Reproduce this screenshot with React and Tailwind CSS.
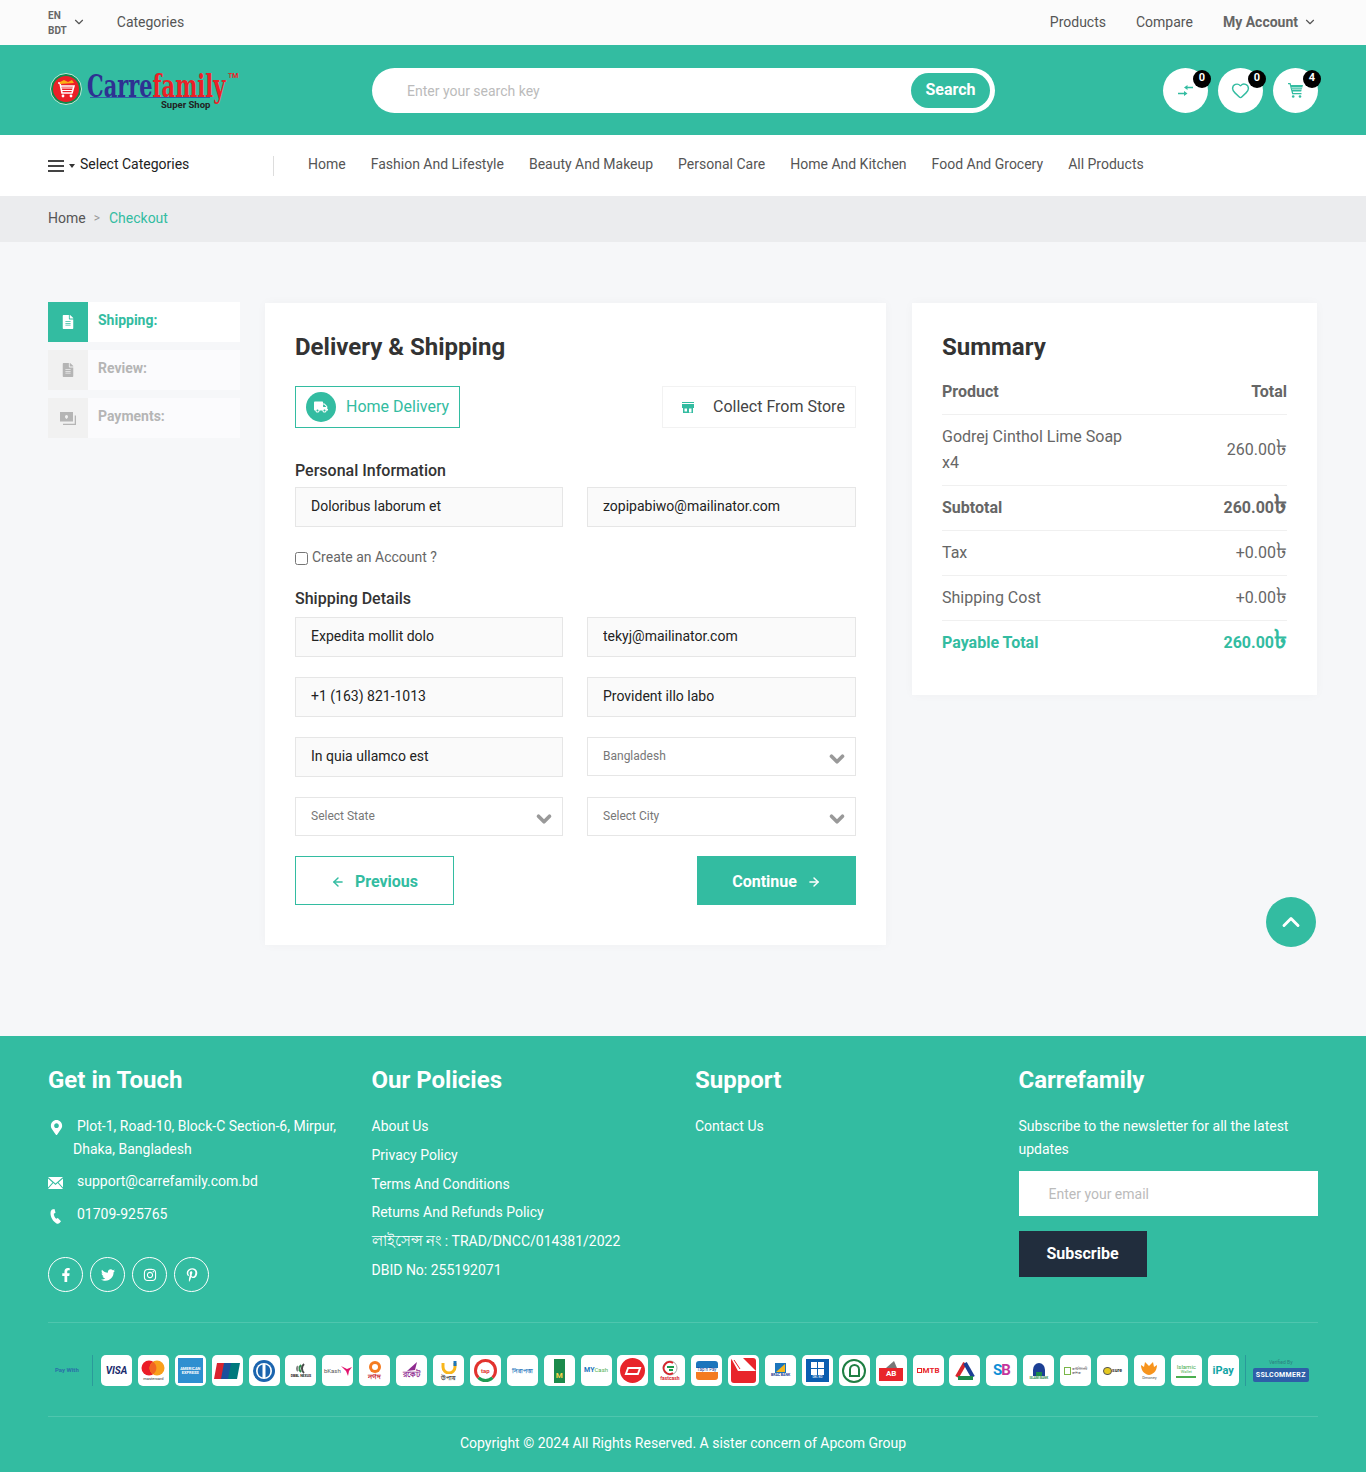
import { ChevronDown, ChevronUp, ArrowLeft, ArrowRight, Heart } from 'lucide-react'
import { FaFileAlt, FaTruck, FaMapMarkerAlt, FaFacebookF, FaTwitter, FaInstagram, FaPinterestP } from 'react-icons/fa'

const TEAL = 'bg-[#33bca1]'
const navItems = ['Home', 'Fashion And Lifestyle', 'Beauty And Makeup', 'Personal Care', 'Home And Kitchen', 'Food And Grocery', 'All Products']
const policies = ['About Us', 'Privacy Policy', 'Terms And Conditions', 'Returns And Refunds Policy']

function Taka({ bold }) {
  return <span className={`leading-[0] ${bold ? 'text-[1.6em]' : 'text-[1.35em]'}`}>৳</span>
}

function TextField({ value }) {
  return (
    <input
      readOnly
      defaultValue={value}
      className="w-full h-10 px-[15px] pb-[2px] border border-[#e6e6e6] bg-[#fafafa] text-sm text-[#222] outline-none"
    />
  )
}

function SelectField({ label }) {
  return (
    <div className="w-full h-[39px] pl-[15px] pr-[7px] border border-[#e6e6e6] bg-white flex items-center justify-between">
      <span className="text-xs text-[#777] -mt-[2px]">{label}</span>
      <ChevronDown className="w-[22px] h-[22px] mt-[5px] text-[#999]" strokeWidth={4} />
    </div>
  )
}

function Step({ icon, label, active }) {
  return (
    <div className={`flex h-10 ${active ? 'bg-white' : 'bg-[#fbfbfd]'}`}>
      <div className={`w-10 flex items-center justify-center text-sm ${active ? 'bg-[#33bca1] text-white' : 'bg-[#f1f1f1] text-[#b5b5b5]'}`}>{icon}</div>
      <span className={`pl-[10px] pt-[10px] text-sm font-bold leading-[16px] ${active ? 'text-[#33bca1]' : 'text-[#b5b5b5]'}`}>{label}</span>
    </div>
  )
}

function SummaryRow({ left, right, className = '' }) {
  return (
    <div className={`flex items-center justify-between h-[45px] border-b border-[#f0f0f0] text-base ${className}`}>
      <span>{left}</span>
      <span>{right}</span>
    </div>
  )
}

function RoundIcon({ count, children }) {
  return (
    <div className="relative w-[45px] h-[45px] rounded-full bg-white flex items-center justify-center text-[#33bca1]">
      {children}
      <span className="absolute top-[2px] right-[-3px] w-[18px] h-[18px] rounded-full bg-black text-white text-[11px] font-bold flex items-center justify-center">{count}</span>
    </div>
  )
}

function Social({ children }) {
  return <div className="w-[35px] h-[35px] rounded-full border border-white flex items-center justify-center text-white text-sm">{children}</div>
}

function Tile({ children }) {
  return <div className="w-[31px] h-[31px] shrink-0 rounded-[5px] bg-white flex flex-col items-center justify-center overflow-hidden leading-none">{children}</div>
}

function PaymentTiles() {
  return (
    <div className="flex gap-[5.9px]">
      <Tile><span className="text-[10px] font-bold italic text-[#1a2a6c]">VISA</span></Tile>
      <Tile>
        <svg width="26" height="16" viewBox="0 0 26 16"><circle cx="9" cy="8" r="7.5" fill="#eb1c26" /><circle cx="17" cy="8" r="7.5" fill="#f99f1b" /><path d="M13 1.700a7.500 7.500 0 0 1 0 12.600a7.500 7.500 0 0 1 0-12.600z" fill="#f26522" /></svg>
        <span className="text-[4px] mt-[1px] text-[#333]">mastercard</span>
      </Tile>
      <Tile><div className="w-[25px] h-[25px] bg-[#2f8fd0] text-white text-[4px] font-bold flex flex-col items-center justify-center"><span>AMERICAN</span><span>EXPRESS</span></div></Tile>
      <Tile>
        <svg width="26" height="18" viewBox="0 0 26 18"><path d="M3 1h8l-3 16H0z" fill="#d9232e" /><path d="M10 1h8l-3 16H7z" fill="#1c4f9c" /><path d="M17 1h9l-3 16h-9z" fill="#00797d" /></svg>
      </Tile>
      <Tile>
        <svg width="24" height="24" viewBox="0 0 24 24"><circle cx="12" cy="12" r="11" fill="#1b64ae" /><circle cx="12" cy="12" r="8" fill="#fff" /><path d="M10.500 5.500a6.800 6.800 0 0 0 0 13zM13.500 5.500a6.800 6.800 0 0 1 0 13z" fill="#1b64ae" /></svg>
      </Tile>
      <Tile>
        <svg width="20" height="13" viewBox="0 0 20 13" fill="none"><path d="M13 2a6 6 0 0 0 0 9" stroke="#4a4a4a" strokeWidth="2" /><path d="M10 3a5 5 0 0 0 0 7" stroke="#2f8e4e" strokeWidth="2" /><path d="M7 4a4 4 0 0 0 0 5" stroke="#888" strokeWidth="2" /></svg>
        <span className="text-[3.5px] font-bold text-[#222]">DBBL NEXUS</span>
      </Tile>
      <Tile>
        <div className="flex items-center"><span className="text-[6px] text-[#555]">bKash</span>
          <svg width="11" height="11" viewBox="0 0 11 11"><path d="M0 1l6 3 5-2-3 4-1 5-2-5z" fill="#e2136e" /></svg></div>
      </Tile>
      <Tile>
        <svg width="14" height="14" viewBox="0 0 14 14"><circle cx="7" cy="7" r="6" fill="#f47b20" /><circle cx="7" cy="7" r="3" fill="#fff" /></svg>
        <span className="text-[7px] font-bold text-[#c62127]">নগদ</span>
      </Tile>
      <Tile>
        <svg width="12" height="9" viewBox="0 0 12 9"><path d="M1 9l10-9-2 8z" fill="#8e2a8f" /></svg>
        <span className="text-[8px] font-bold text-[#8e2a8f]">রকেট</span>
      </Tile>
      <Tile>
        <svg width="16" height="13" viewBox="0 0 16 13" fill="none"><path d="M2 2v4a6 6 0 0 0 12 0V2" stroke="#f8b61c" strokeWidth="3" /><path d="M14 0v5" stroke="#1c75bc" strokeWidth="3" /></svg>
        <span className="text-[6px] font-bold text-[#333] mt-[1px]">উপায়</span>
      </Tile>
      <Tile><div className="w-[23px] h-[23px] rounded-full border-[3px] border-[#e2322d] border-b-[#1f9d55] flex items-center justify-center text-[6px] font-bold text-[#e2322d]">tap</div></Tile>
      <Tile><span className="text-[6px] font-bold text-[#1c75bc]">নিরাপত্তা</span></Tile>
      <Tile><div className="w-[11px] h-[24px] bg-[#1b8a4b] text-[#f8d24a] text-[8px] font-bold flex items-end justify-center pb-[3px]">M</div></Tile>
      <Tile><div className="flex items-baseline"><span className="text-[7px] font-bold text-[#1c75bc]">MY</span><span className="text-[6px] text-[#4caf50]">Cash</span></div></Tile>
      <Tile><div className="w-[25px] h-[25px] rounded-full bg-[#e8252b] flex items-center justify-center"><div className="w-[14px] h-[8px] border-2 border-white -skew-x-[20deg]" /></div></Tile>
      <Tile>
        <svg width="18" height="16" viewBox="0 0 18 16" fill="none"><circle cx="9" cy="8" r="7" stroke="#aaa" /><path d="M12 3a6 6 0 1 0 0 10" stroke="#d7262c" strokeWidth="2" /><path d="M6 7h7M8 10h4" stroke="#1c9a4d" strokeWidth="2" /></svg>
        <span className="text-[5px] font-bold text-[#d7262c]">fastcash</span>
      </Tile>
      <Tile>
        <div className="w-[22px] h-[7px] bg-[#1c75bc] rounded-t-[3px]" />
        <span className="text-[4.5px] text-[#1c3f94]">Tap n Pay</span>
        <div className="w-[22px] h-[8px] bg-[#f47b20] rounded-b-[3px]" />
      </Tile>
      <Tile>
        <svg width="25" height="25" viewBox="0 0 25 25"><rect width="25" height="25" rx="3" fill="#e8252b" /><path d="M0 0h12l13 13H7z" fill="#fff" /><path d="M3 2l6 9" stroke="#e8252b" /></svg>
      </Tile>
      <Tile>
        <svg width="11" height="10" viewBox="0 0 11 10"><rect width="11" height="10" fill="#1c75bc" /><path d="M1 9L10 1v8z" fill="#f8b61c" /></svg>
        <span className="text-[3.5px] font-bold text-[#1c3f94] mt-[1px]">BRAC BANK</span>
      </Tile>
      <Tile>
        <div className="w-[23px] h-[23px] bg-[#0a5eb0] flex flex-col items-center justify-center">
          <div className="grid grid-cols-2 gap-[1px]"><div className="w-[6px] h-[6px] bg-white" /><div className="w-[6px] h-[6px] bg-white" /><div className="w-[6px] h-[6px] bg-white" /><div className="w-[6px] h-[6px] bg-white" /></div>
          <span className="text-[3px] text-white mt-[1px]">DBL BD</span>
        </div>
      </Tile>
      <Tile><div className="w-[24px] h-[24px] rounded-full border-2 border-[#1f7f43] flex items-center justify-center"><div className="w-[11px] h-[13px] rounded-t-full border-2 border-[#1f7f43]" /></div></Tile>
      <Tile>
        <svg width="14" height="7" viewBox="0 0 14 7"><path d="M2 7l8-7 3 7z" fill="#777" /></svg>
        <div className="w-[24px] h-[13px] bg-[#e8252b] text-white text-[8px] font-bold flex items-center justify-center">AB</div>
      </Tile>
      <Tile><div className="flex items-center gap-[1px]"><span className="w-[5px] h-[5px] border border-[#e8252b]" /><span className="text-[8px] font-bold text-[#e8252b]">MTB</span></div></Tile>
      <Tile>
        <svg width="22" height="22" viewBox="0 0 22 22" fill="none"><path d="M11 3L3 17" stroke="#d7262c" strokeWidth="4" /><path d="M11 3l8 14" stroke="#1c3f94" strokeWidth="4" /><path d="M4 18h15" stroke="#1c8a4b" strokeWidth="4" /></svg>
      </Tile>
      <Tile><div className="flex text-[15px] font-bold leading-none"><span className="text-[#0e8fd6]">S</span><span className="text-[#c5359b] -ml-[1px]">B</span></div></Tile>
      <Tile>
        <svg width="14" height="14" viewBox="0 0 14 14"><path d="M1 14V8a6 7 0 0 1 12 0v6z" fill="#1c3f94" /><rect x="4" y="10" width="6" height="4" fill="#1c8a4b" /></svg>
        <span className="text-[3px] font-bold text-[#1c8a4b] text-center mt-[1px]">ISLAMI BANK</span>
      </Tile>
      <Tile>
        <div className="flex items-center gap-[1px]"><span className="w-[7px] h-[8px] border border-[#7ab648]" /><span className="text-[3.5px] text-[#333] leading-[4px]">কমিউনিটি<br />ব্যাংক</span></div>
      </Tile>
      <Tile>
        <div className="flex items-center"><span className="w-[9px] h-[8px] rounded-full bg-[#e5c81f] border border-[#555]" /><span className="text-[5px] font-bold text-[#333]">sure</span></div>
      </Tile>
      <Tile>
        <svg width="18" height="14" viewBox="0 0 18 14"><path d="M9 14C3 13 1 8 1 4l3 2 1-5 4 4 4-4 1 5 3-2c0 4-2 9-8 10z" fill="#f7941d" /></svg>
        <span className="text-[4px] text-[#555] mt-[1px]">Dmoney</span>
      </Tile>
      <Tile>
        <span className="text-[6px] text-[#4caf50]">Islamic</span>
        <span className="text-[4px] text-[#4caf50]">Wallet</span>
        <div className="w-[20px] h-[2px] bg-[#4caf50] mt-[2px]" />
      </Tile>
      <Tile><span className="text-[11px] font-bold text-[#12a5a5]">iPay</span></Tile>
    </div>
  )
}

export default function App() {
  return (
    <div className="w-full font-['Roboto',sans-serif] text-[#333]">
      {/* top bar */}
      <div className="h-[45px] bg-[#fbfbfb] px-12 flex items-center justify-between">
        <div className="flex items-center">
          <div className="text-[10px] font-bold text-[#666] leading-[15px] mt-[1px]">
            <div>EN</div>
            <div>BDT</div>
          </div>
          <ChevronDown className="w-[14px] h-[14px] ml-[5px] -mt-[1px] text-[#555]" />
          <span className="ml-[31px] mb-[2px] text-sm text-[#555]">Categories</span>
        </div>
        <div className="flex items-center text-sm text-[#555] gap-[30px] pr-[1px] mb-[2px]">
          <span>Products</span>
          <span>Compare</span>
          <span className="flex items-center font-bold text-[#666]">My Account<ChevronDown className="w-[14px] h-[14px] ml-[5px] text-[#555]" /></span>
        </div>
      </div>

      {/* header */}
      <div className={`h-[90px] ${TEAL} px-12 flex items-center`}>
        <div className="w-[324px] flex items-center -mt-[2px]">
          <svg width="32" height="32" viewBox="0 0 32 32" className="shrink-0 ml-[2px]">
            <circle cx="16" cy="16" r="15.500" fill="#0e8a4d" stroke="#bfe8dc" strokeWidth="1" />
            <circle cx="16" cy="16" r="13" fill="#ec1f27" />
            <path d="M8 10h2l2 10h10l2-7H11" fill="none" stroke="#fff" strokeWidth="1.600" />
            <path d="M12 15h11M12 17.500h10" stroke="#fff" strokeWidth="1" />
            <circle cx="13" cy="23" r="1.400" fill="#fff" /><circle cx="21" cy="23" r="1.400" fill="#fff" />
            <path d="M10 9l4-2 4 2 4-2 2 3-14 1z" fill="#fbb017" />
          </svg>
          <div className="relative w-[152px] h-[44px] ml-[5px]">
            <div className="absolute left-0 top-[7px] origin-left scale-x-[0.675] whitespace-nowrap font-['DejaVu_Serif',serif] text-[31px] font-bold leading-[24px]">
              <span className="text-[#2e3192]">Carre</span><span className="text-[#ec1f27]">family</span>
            </div>
            <div className="absolute left-[3px] top-[30px] w-[120px] h-[1px] bg-[#2e5fa8]" />
            <span className="absolute left-[141px] top-[4px] text-[7px] font-bold text-[#ec1f27]">TM</span>
            <span className="absolute left-[74px] top-[31px] text-[9.500px] font-bold text-[#222] whitespace-nowrap">Super Shop</span>
          </div>
        </div>
        <div className="w-[623px] h-[45px] rounded-full bg-white flex items-center justify-between pl-[35px] pr-[5px]">
          <span className="mt-[2px] text-sm text-[#bbb]">Enter your search key</span>
          <span className={`w-[79px] h-[35px] rounded-full ${TEAL} text-white text-base font-bold flex items-center justify-center`}>Search</span>
        </div>
        <div className="ml-auto flex gap-[10px]">
          <RoundIcon count="0">
            <svg width="15" height="11" viewBox="0 0 15 11" fill="currentColor"><path d="M6 2.500L9.500 0v1.800H15v1.400H9.500V5zM9.500 8.500L6 11V9.200H0V7.800h6V6z" /></svg>
          </RoundIcon>
          <RoundIcon count="0"><Heart className="w-[19px] h-[19px]" strokeWidth={1.8} /></RoundIcon>
          <RoundIcon count="4">
            <svg width="15" height="15" viewBox="0 0 15 15" fill="currentColor"><path d="M0 0h2.500l.6 2H15l-1.800 6.500H4.800l.4 1.500h8.300v1.200H4.200L1.600 1.200H0z" /><path d="M3.500 4.400h11v.8h-11zM4 6.400h10v.6H4z" fill="#fff" /><circle cx="5.200" cy="13.500" r="1.300" /><circle cx="12" cy="13.500" r="1.300" /></svg>
          </RoundIcon>
        </div>
      </div>

      {/* nav */}
      <div className="h-[61px] bg-white px-12 flex items-center">
        <div className="w-[225px] flex items-center">
          <div className="w-4 flex flex-col gap-[3px]">
            <div className="h-[2px] bg-[#444]" />
            <div className="h-[2px] bg-[#444]" />
            <div className="h-[2px] bg-[#444]" />
          </div>
          <div className="ml-[5px] mt-[1px] w-0 h-0 border-x-[3.500px] border-x-transparent border-t-[4px] border-t-[#333]" />
          <span className="ml-[5px] mb-[4px] text-sm text-[#222]">Select Categories</span>
        </div>
        <div className="w-px h-5 bg-[#ddd]" />
        <div className="ml-[34px] mb-[4px] flex gap-[25px] text-sm text-[#555]">
          {navItems.map(n => <span key={n}>{n}</span>)}
        </div>
      </div>

      {/* breadcrumb */}
      <div className="h-[46px] bg-[#ebecee] px-12 pb-[2px] flex items-center text-sm">
        <span className="text-[#555]">Home</span>
        <span className="ml-[8px] mr-[9px] text-xs text-[#999]">&gt;</span>
        <span className="text-[#33bca1]">Checkout</span>
      </div>

      {/* checkout */}
      <div className="relative bg-[#f6f7f9] pt-[60px] pb-[91px] px-12 flex items-start">
        <div className="w-[192px] flex flex-col gap-2">
          <Step active label="Shipping:" icon={<FaFileAlt />} />
          <Step label="Review:" icon={<FaFileAlt />} />
          <Step label="Payments:" icon={
            <svg width="16" height="13" viewBox="0 0 16 13" fill="currentColor" className="mt-[1px]">
              <path fillRule="evenodd" d="M0 0h13v9.500H0zM6.500 3a1.800 1.800 0 0 0-1.500 1.800c0 1 .8 1.700 1.500 2.200.7-.5 1.500-1.200 1.500-2.200A1.800 1.800 0 0 0 6.500 3z" />
              <path d="M14.700 3.500H16V13H3v-1.200h11.700z" />
            </svg>
          } />
        </div>

        <div className="ml-[25px] mt-px w-[621px] bg-white px-[30px] pt-[30px] pb-[40px] shadow-[0_0_10px_rgba(0,0,0,0.03)]">
          <h2 className="text-2xl font-bold leading-[28px] text-[#333]">Delivery &amp; Shipping</h2>
          <div className="mt-[25px] flex justify-between">
            <div className="w-[165px] h-[42px] border border-[#33bca1] flex items-center pl-[10px]">
              <span className={`w-[30px] h-[30px] rounded-full ${TEAL} text-white text-sm flex items-center justify-center`}><FaTruck /></span>
              <span className="ml-[10px] text-base text-[#33bca1]">Home Delivery</span>
            </div>
            <div className="w-[194px] h-[42px] border border-[#f2f2f2] flex items-center pl-[19px]">
              <svg width="12" height="11" viewBox="0 0 12 11" fill="#33bca1">
                <path fillRule="evenodd" d="M0 0h12v1H0zM0 2h12v4H11v5H1V6H0zM2.500 6.500v3h2.500v-3zM7 6.500v4h2.500v-4z" />
              </svg>
              <span className="ml-[19px] text-base text-[#444]">Collect From Store</span>
            </div>
          </div>

          <h3 className="mt-[33px] text-base font-medium leading-[19px] text-[#333]">Personal Information</h3>
          <div className="mt-[7px] grid grid-cols-[268px_269px] gap-x-6">
            <TextField value="Doloribus laborum et" />
            <TextField value="zopipabiwo@mailinator.com" />
          </div>
          <label className="mt-[22px] flex items-center text-sm leading-[16px] text-[#666]">
            <input type="checkbox" className="w-[13px] h-[13px] mt-[2px] mr-[4px]" />
            Create an Account ?
          </label>
          <h3 className="mt-[24px] text-base font-medium leading-[19px] text-[#333]">Shipping Details</h3>
          <div className="mt-[9px] grid grid-cols-[268px_269px] gap-x-6 gap-y-5">
            <TextField value="Expedita mollit dolo" />
            <TextField value="tekyj@mailinator.com" />
            <TextField value="+1 (163) 821-1013" />
            <TextField value="Provident illo labo" />
            <TextField value="In quia ullamco est" />
            <SelectField label="Bangladesh" />
            <SelectField label="Select State" />
            <SelectField label="Select City" />
          </div>
          <div className="mt-5 flex justify-between">
            <div className="w-[159px] h-[49px] pt-[2px] border border-[#33bca1] flex items-center justify-center text-base font-bold text-[#33bca1]">
              <ArrowLeft className="w-[14px] h-[14px] mr-[10px]" strokeWidth={2.5} />Previous
            </div>
            <div className={`w-[159px] h-[49px] pt-[2px] ${TEAL} flex items-center justify-center text-base font-bold text-white`}>
              Continue<ArrowRight className="w-[14px] h-[14px] ml-[10px]" strokeWidth={2.5} />
            </div>
          </div>
        </div>

        <div className="ml-[26px] mt-px w-[405px] bg-white px-[30px] pt-[30px] pb-[29px] shadow-[0_0_10px_rgba(0,0,0,0.03)] text-[#666]">
          <h2 className="text-2xl font-bold leading-[28px] text-[#333]">Summary</h2>
          <div className="mt-[9px]">
            <SummaryRow left="Product" right="Total" className="font-bold" />
            <div className="flex items-center justify-between h-[71px] border-b border-[#f0f0f0] text-base">
              <span className="leading-[26px] w-[200px]">Godrej Cinthol Lime Soap<br />x4</span>
              <span>260.00<Taka /></span>
            </div>
            <SummaryRow left="Subtotal" right={<>260.00<Taka bold /></>} className="font-bold" />
            <SummaryRow left="Tax" right={<>+0.00<Taka /></>} />
            <SummaryRow left="Shipping Cost" right={<>+0.00<Taka /></>} />
            <SummaryRow left="Payable Total" right={<>260.00<Taka bold /></>} className="font-bold text-[#33bca1] border-b-0 pb-[2px]" />
          </div>
        </div>

        <div className={`absolute left-[1266px] top-[655px] w-[50px] h-[50px] rounded-full ${TEAL} flex items-center justify-center text-white`}>
          <ChevronUp className="w-7 h-7" strokeWidth={2.5} />
        </div>
      </div>

      {/* footer */}
      <div className={`h-[436px] ${TEAL} px-12 pt-[28px] text-white text-sm`}>
        <div className="h-[258px] grid grid-cols-[323.500px_323.500px_323.500px_1fr]">
          <div>
            <h4 className="text-2xl font-bold leading-[32px]">Get in Touch</h4>
            <div className="mt-[19px] w-[292px] relative pl-[25px] leading-[23px]">
              <FaMapMarkerAlt className="absolute left-[1px] top-[5px] text-[15px]" />
              <span className="ml-[4px]">Plot-1, Road-10, Block-C Section-6, Mirpur,</span> Dhaka, Bangladesh
            </div>
            <div className="mt-[9px] flex">
              <svg width="15" height="12" viewBox="0 0 15 12" fill="#fff" className="mt-[7px] shrink-0">
                <path d="M0 0h15L7.500 6.500zM0 1.500L4.500 5.400 0 10.500zM15 1.500L10.500 5.400 15 10.500zM5.300 6.100l2.200 1.900 2.200-1.900L15 12H0z" />
              </svg>
              <span className="ml-[14px] leading-[23px]">support@carrefamily.com.bd</span>
            </div>
            <div className="mt-[10px] flex">
              <svg width="11" height="15" viewBox="0 0 11 15" fill="#fff" className="mt-[6px] ml-[2px] shrink-0">
                <path d="M2 .5L4.500 0l1 3.800-1.700 1c0 1.800 1 3.800 2.400 5l1.600-.8L11 12.300 9.500 14c-.8.800-2 1-3 .4C3 12.500.5 8 .5 4.200.5 2.500 1 1.200 2 .5z" />
              </svg>
              <span className="ml-[16px] leading-[23px]">01709-925765</span>
            </div>
            <div className="mt-[31px] flex gap-[7px]">
              <Social><FaFacebookF /></Social>
              <Social><FaTwitter /></Social>
              <Social><FaInstagram /></Social>
              <Social><FaPinterestP /></Social>
            </div>
          </div>
          <div>
            <h4 className="text-2xl font-bold leading-[32px]">Our Policies</h4>
            <ul className="mt-[19px] flex flex-col gap-[6.800px] leading-[22px]">
              {policies.map(p => <li key={p}>{p}</li>)}
              <li><span className="text-[15px] font-medium">লাইসেন্স নং</span> : TRAD/DNCC/014381/2022</li>
              <li>DBID No: 255192071</li>
            </ul>
          </div>
          <div>
            <h4 className="text-2xl font-bold leading-[32px]">Support</h4>
            <div className="mt-[19px] leading-[22px]">Contact Us</div>
          </div>
          <div>
            <h4 className="text-2xl font-bold leading-[32px]">Carrefamily</h4>
            <p className="mt-[19px] leading-[23px]">Subscribe to the newsletter for all the latest updates</p>
            <div className="mt-[10px] h-[45px] bg-white pl-[30px] flex items-center text-[#bbb]">Enter your email</div>
            <div className="mt-[15px] w-[128px] h-[46px] bg-[#212d3d] flex items-center justify-center text-base font-bold">Subscribe</div>
          </div>
        </div>

        <div className="border-t border-[#4fc6ae] h-[94px] pt-[2px] flex items-center pl-[7px]">
          <span className="w-[30px] text-[6px] font-bold text-[#2a6fa8] whitespace-nowrap">Pay With</span>
          <div className="w-px h-[31px] bg-[#2a9a9a] ml-[7px] mr-[8px]" />
          <PaymentTiles />
          <div className="w-px h-[31px] bg-[#2a9a9a] ml-[6px] mr-[7px]" />
          <div className="flex flex-col items-center">
            <span className="text-[5px] text-[#2a7f7f]">Verified By</span>
            <span className="mt-[1px] px-[3px] py-[2px] rounded-[2px] bg-[#2e5fa8] text-[7px] font-bold text-white tracking-wider">SSLCOMMERZ</span>
          </div>
        </div>

        <div className="border-t border-[#4fc6ae] pt-[16px] text-center leading-[20px]">
          Copyright © 2024 All Rights Reserved. A sister concern of Apcom Group
        </div>
      </div>
    </div>
  )
}
